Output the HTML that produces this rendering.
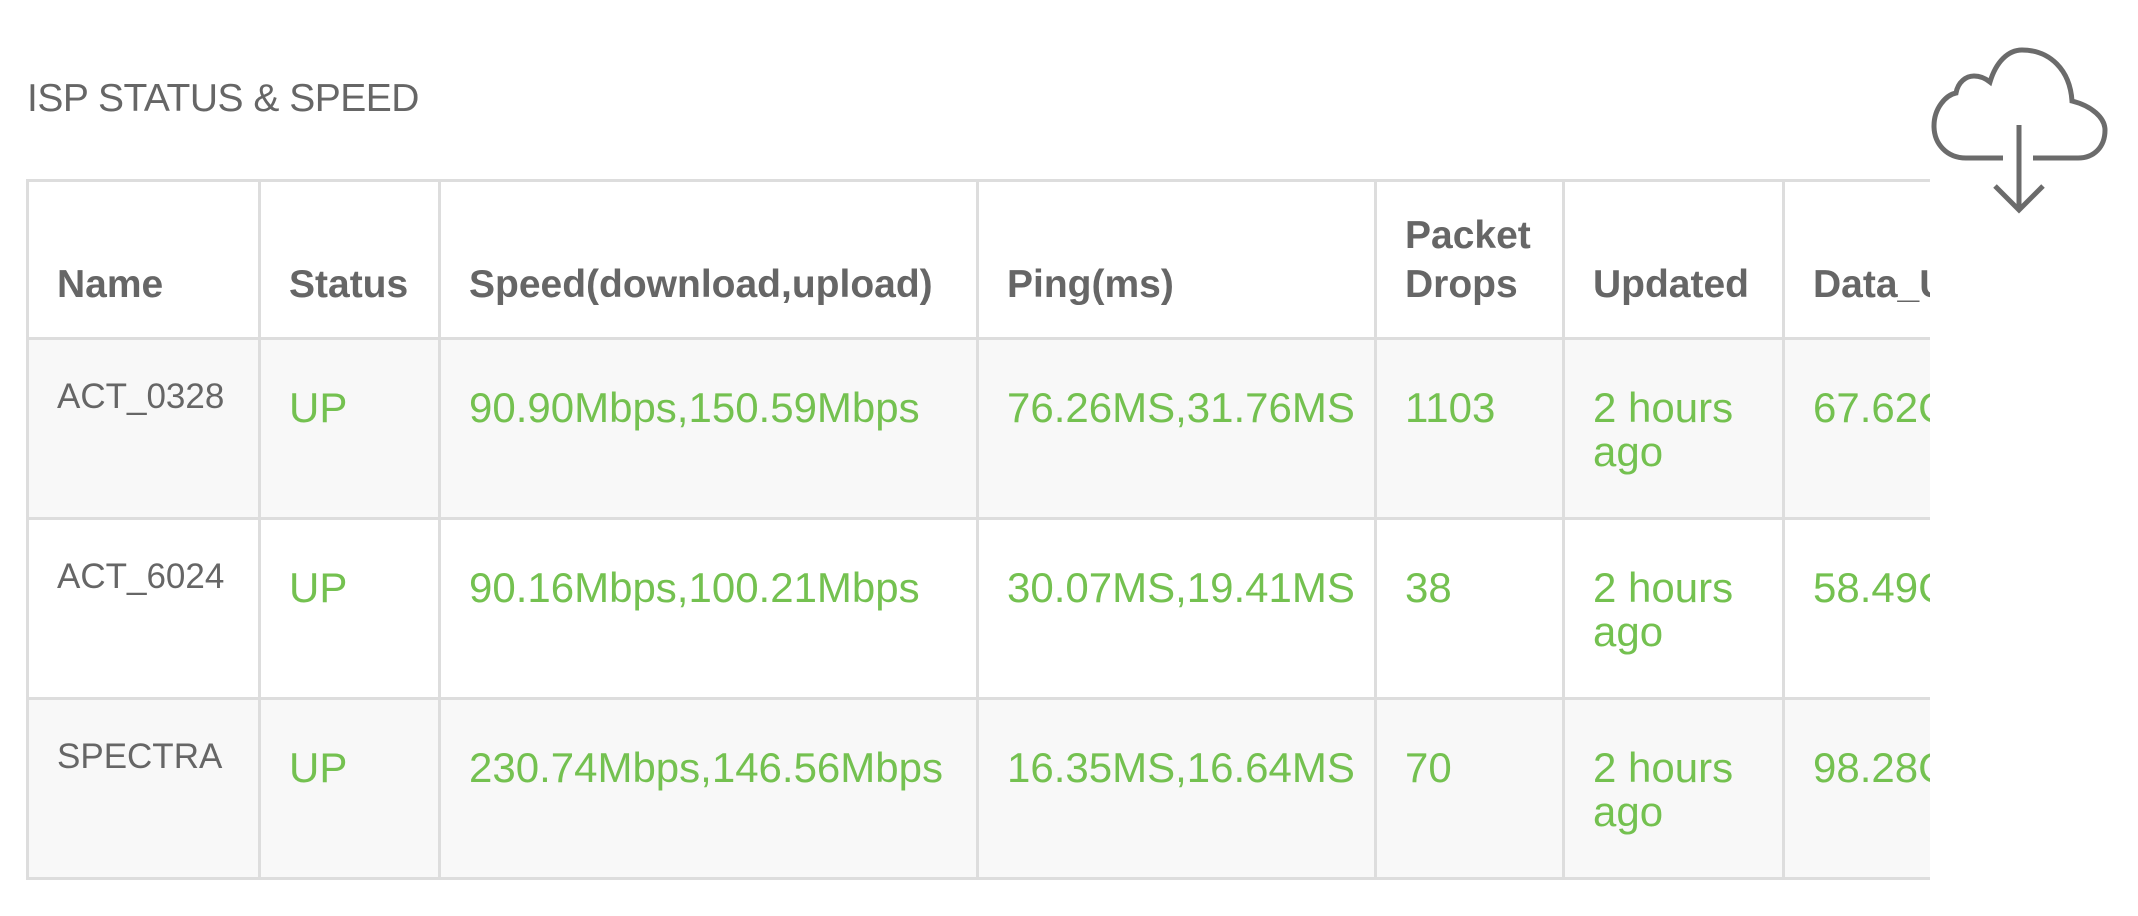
<!DOCTYPE html>
<html><head><style>
body{margin:0;width:2138px;height:916px;background:#fff;font-family:"Liberation Sans",sans-serif;position:relative;overflow:hidden}
h1{position:absolute;left:27px;top:77px;margin:0;font-weight:normal;font-size:39px;color:#666;letter-spacing:-0.5px}
.wrap{position:absolute;left:26px;top:179px;width:1904px;height:705px;overflow:hidden}
table{border-collapse:collapse;table-layout:fixed;width:2100px}
td,th{border:3px solid #ddd;padding:0 0 0 28px;text-align:left;overflow:hidden;white-space:nowrap}
th{height:158px;vertical-align:bottom;font-size:39px;line-height:49px;color:#666;padding-bottom:28px;box-sizing:border-box;white-space:normal}
td{height:180px;vertical-align:top;font-size:42px;line-height:44px;color:#74c150;padding-top:46px;box-sizing:border-box;white-space:normal}
td.n{color:#666;font-size:35px;padding-top:35px}
tr.g td{background:#f8f8f8}
</style></head><body>
<h1>ISP STATUS &amp; SPEED</h1>
<svg style="position:absolute;left:0;top:0" width="2138" height="916" fill="none" stroke="#6b6b6b" stroke-width="5">
<path d="M2003 158 H1966 C1947 158 1934 144 1934 126 C1934 108 1946 95 1956 93 C1958 82 1966 76 1974 76 C1980 76 1985 78 1990 82 C1996 62 2008 50 2022 50 C2050 50 2070 70 2072 101 C2092 106 2105 118 2105 130 C2105 147 2094 158 2078 158 H2033"/>
<path d="M2019 125 V211 M1995 186 L2019 210 L2043 186"/>
</svg>
<div class="wrap"><table>
<colgroup><col style="width:232px"><col style="width:180px"><col style="width:538px"><col style="width:398px"><col style="width:188px"><col style="width:220px"><col style="width:344px"></colgroup>
<tr><th>Name</th><th>Status</th><th>Speed(download,upload)</th><th>Ping(ms)</th><th>Packet Drops</th><th>Updated</th><th>Data_Usage</th></tr>
<tr class="g"><td class="n">ACT_0328</td><td>UP</td><td>90.90Mbps,150.59Mbps</td><td>76.26MS,31.76MS</td><td>1103</td><td>2 hours ago</td><td>67.62GB</td></tr>
<tr><td class="n">ACT_6024</td><td>UP</td><td>90.16Mbps,100.21Mbps</td><td>30.07MS,19.41MS</td><td>38</td><td>2 hours ago</td><td>58.49GB</td></tr>
<tr class="g"><td class="n">SPECTRA</td><td>UP</td><td>230.74Mbps,146.56Mbps</td><td>16.35MS,16.64MS</td><td>70</td><td>2 hours ago</td><td>98.28GB</td></tr>
</table></div>
</body></html>
